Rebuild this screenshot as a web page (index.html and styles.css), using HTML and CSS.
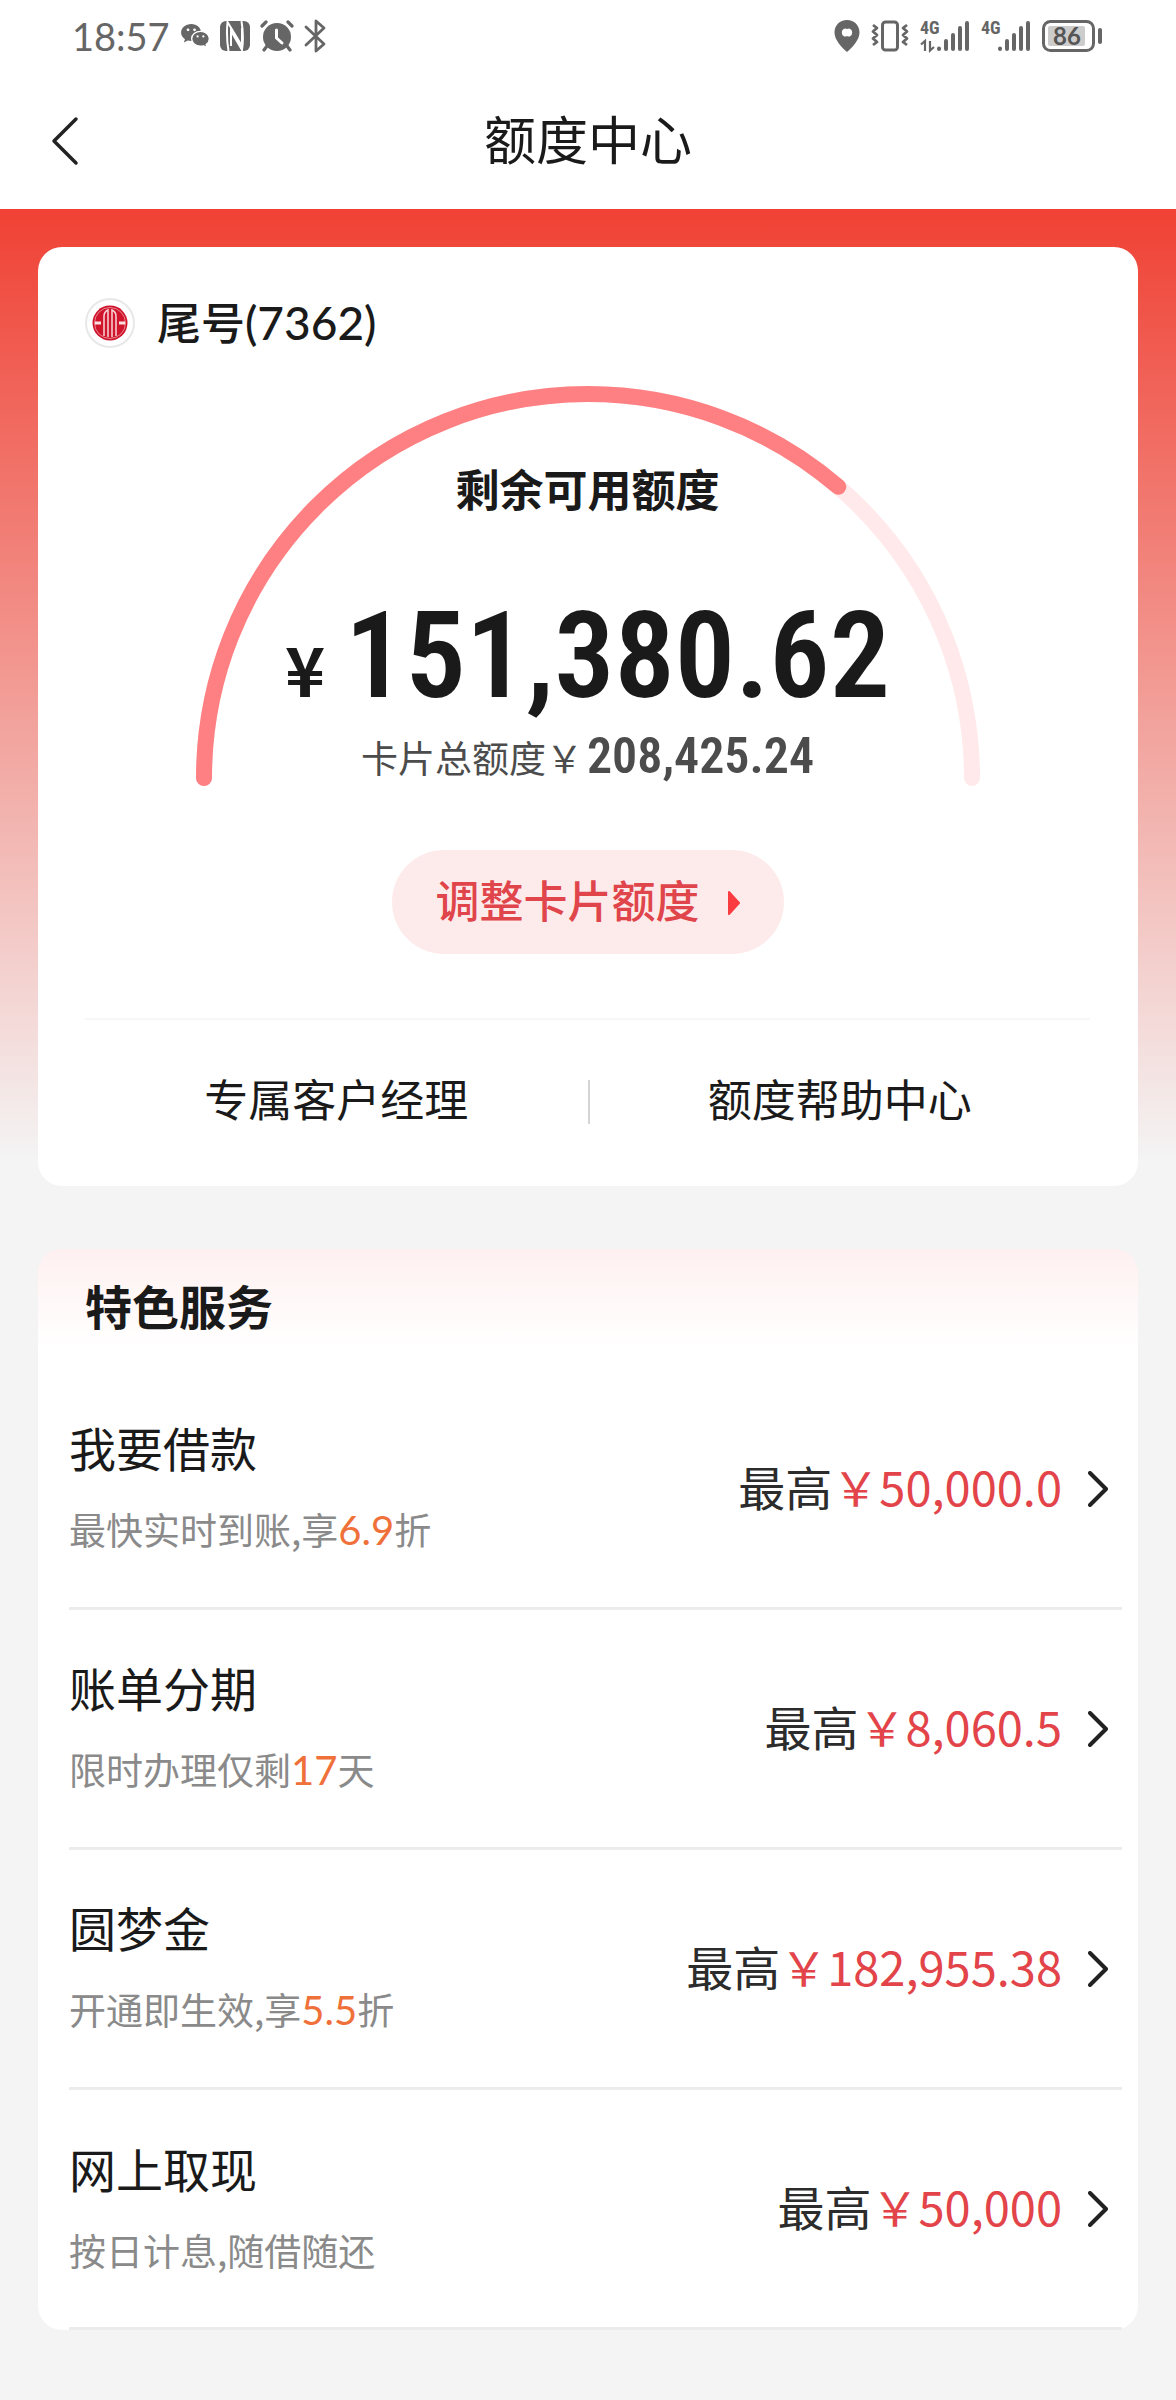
FILE: index.html
```html
<!DOCTYPE html>
<html lang="zh-CN">
<head>
<meta charset="utf-8">
<meta name="viewport" content="width=device-width, initial-scale=1">
<title>额度中心</title>
<link rel="stylesheet" href="styles.css">
</head>
<body>
<div class="status">
  <div class="status-side status-left">
    <time class="clock">18:57</time>
    <svg width="30" height="26" viewBox="0 0 32 28" aria-hidden="true">
      <path fill="#666" d="M12 1C5.900 1 1 5 1 10.200c0 3 1.600 5.500 4.200 7.200L4 21l4.200-2.100c1.200.3 2.500.5 3.800.5C18 19.400 22.500 15.500 22.500 10.200S18 1 12 1z"/>
      <path fill="#666" stroke="#fff" stroke-width="1.500" d="M22 9c-5.500 0-9.600 3.500-9.600 8s4.100 8 9.600 8c1.100 0 2.100-.1 3.100-.4L29 26.700l-1-3.500c2.200-1.500 3.500-3.700 3.500-6.200 0-4.500-4.200-8-9.500-8z"/>
      <g fill="#fff"><circle cx="8.500" cy="7.300" r="1.500"/><circle cx="15.500" cy="7.300" r="1.500"/><circle cx="18.800" cy="14.500" r="1.200"/><circle cx="25" cy="14.500" r="1.200"/></g>
    </svg>
    <svg width="30" height="30" viewBox="0 0 30 30" aria-hidden="true">
      <rect width="30" height="30" rx="6" fill="#666"/>
      <path fill="none" stroke="#fff" stroke-width="2" d="M8.500 30C7 21 6.500 11 7.500 1L22 25V7M21.500 0c1.500 9 2 19 .5 29L11 10v15"/>
    </svg>
    <svg width="34" height="32" viewBox="0 0 34 32" aria-hidden="true">
      <circle cx="17" cy="17" r="14" fill="#666"/>
      <path fill="none" stroke="#666" stroke-width="3.200" stroke-linecap="round" d="M2 6l4-4M32 6l-4-4M7 26l-3 4M27 26l3 4"/>
      <path fill="none" stroke="#fff" stroke-width="3" stroke-linecap="round" stroke-linejoin="round" d="M16.500 10v8l5.500 5"/>
    </svg>
    <svg width="22" height="34" viewBox="0 0 22 34" aria-hidden="true">
      <path fill="none" stroke="#666" stroke-width="2.800" stroke-linecap="round" stroke-linejoin="round" d="M2 8l18 17-8 7V2l8 7L2 26"/>
    </svg>
  </div>
  <div class="status-side status-right">
    <svg width="26" height="32" viewBox="0 0 26 32" aria-hidden="true">
      <path fill="#666" fill-rule="evenodd" d="M13 0C5.800 0 .5 5.400.5 12.400.5 20 8 27.500 13 32c5-4.500 12.500-12 12.500-19.600C25.500 5.400 20.200 0 13 0zm0 9a3.500 4 0 1 1 0 7 3.500 4 0 1 1 0-7z"/>
    </svg>
    <svg width="38" height="32" viewBox="0 0 38 32" aria-hidden="true">
      <rect x="11.500" y="2" width="15" height="28" rx="3" fill="none" stroke="#666" stroke-width="3"/>
      <path fill="none" stroke="#666" stroke-width="2.800" stroke-linejoin="round" d="M2 5l4 3-4 3.500L6 15l-4 3.500L6 22l-4 3M36 5l-4 3 4 3.500-4 3.500 4 3.500-4 3.500 4 3"/>
    </svg>
    <svg class="signal" width="50" height="34" viewBox="0 0 50 34" aria-hidden="true">
      <text class="net" x="0" y="15">4G</text>
      <path fill="none" stroke="#666" stroke-width="2.200" d="M1 25.500l4-3.500v10M10 22v9.500l4-3.500"/>
      <path fill="none" stroke="#666" stroke-width="4" stroke-linecap="round" d="M19 29.500v.5M26 22v8M33 16v14M40 9v21M47 4v26"/>
    </svg>
    <svg class="signal" width="50" height="34" viewBox="0 0 50 34" aria-hidden="true">
      <text class="net" x="0" y="15">4G</text>
      <path fill="none" stroke="#666" stroke-width="4" stroke-linecap="round" d="M19 29.500v.5M26 22v8M33 16v14M40 9v21M47 4v26"/>
    </svg>
    <svg width="60" height="32" viewBox="0 0 60 32" aria-hidden="true">
      <rect x="1.500" y="1.500" width="50" height="29" rx="7" fill="none" stroke="#666" stroke-width="3"/>
      <rect x="6" y="6" width="37" height="20" rx="2" fill="#ccc"/>
      <text class="charge" x="25" y="25" text-anchor="middle">86</text>
      <path stroke="#666" stroke-width="4" stroke-linecap="round" d="M58 10v12"/>
    </svg>
  </div>
</div>
<header class="bar">
  <button class="back" type="button" aria-label="返回">
    <svg width="28" height="50" viewBox="0 0 28 50" aria-hidden="true"><path fill="none" stroke="#222" stroke-width="3.500" stroke-linecap="round" stroke-linejoin="round" d="M25 3L3 25l22 22"/></svg>
  </button>
  <h1 class="bar-title">额度中心</h1>
</header>
<main class="page">
  <section class="card">
    <div class="account">
      <svg width="50" height="50" viewBox="0 0 50 50" aria-hidden="true">
        <circle cx="25" cy="25" r="24" fill="#fff" stroke="#e8e8e8" stroke-width="2"/>
        <circle cx="25" cy="25" r="17.500" fill="#d0142c"/>
        <circle cx="25" cy="25" r="15.500" fill="none" stroke="#e8868f"/>
        <path fill="none" stroke="#f9d3d6" stroke-width="1.500" d="M19 38V18q0-4 4-6v27M31 38V18q0-4-4-6v27"/>
        <path fill="none" stroke="#fbdfe1" stroke-width="3" d="M10 25h6M34 25h6"/>
      </svg>
      <span class="tail">尾号<span class="tail-num">(7362)</span></span>
    </div>
    <div class="gauge">
      <svg class="arc" viewBox="0 0 784 400" aria-hidden="true">
        <path class="arc-track" d="M8 392a384 384 0 0 1 768 0"/>
        <path class="arc-value" pathLength="1000" stroke-dasharray="726 1000" d="M8 392a384 384 0 0 1 768 0"/>
      </svg>
      <div class="gauge-text">
        <h2 class="gauge-label">剩余可用额度</h2>
        <p class="balance"><span class="yen">¥</span><span>151,380.62</span></p>
        <p class="total"><span>卡片总额度￥</span><span class="total-num">208,425.24</span></p>
      </div>
    </div>
    <button class="adjust" type="button">调整卡片额度
      <svg class="play" width="12" height="26" viewBox="0 0 12 26" aria-hidden="true"><path fill="#fa3c41" stroke="#fa3c41" stroke-width="2" stroke-linejoin="round" d="M1 2l10 11L1 24z"/></svg>
    </button>
    <nav class="links">
      <a class="link" href="#manager">专属客户经理</a>
      <a class="link" href="#help">额度帮助中心</a>
    </nav>
  </section>
  <section class="services">
    <h2 class="services-title">特色服务</h2>
    <ul class="list">
      <li><a class="row" href="#loan">
        <span class="info"><span class="name">我要借款</span><span class="desc">最快实时到账,享<b class="hot">6.9</b>折</span></span>
        <span class="limit">最高<span class="amount">￥50,000.0</span></span>
        <svg class="chevron" viewBox="0 0 20 36" aria-hidden="true"><path d="M2 2l16 16L2 34"/></svg>
      </a></li>
      <li><a class="row" href="#bill">
        <span class="info"><span class="name">账单分期</span><span class="desc">限时办理仅剩<b class="hot">17</b>天</span></span>
        <span class="limit">最高<span class="amount">￥8,060.5</span></span>
        <svg class="chevron" viewBox="0 0 20 36" aria-hidden="true"><path d="M2 2l16 16L2 34"/></svg>
      </a></li>
      <li><a class="row" href="#dream">
        <span class="info"><span class="name">圆梦金</span><span class="desc">开通即生效,享<b class="hot">5.5</b>折</span></span>
        <span class="limit">最高<span class="amount">￥182,955.38</span></span>
        <svg class="chevron" viewBox="0 0 20 36" aria-hidden="true"><path d="M2 2l16 16L2 34"/></svg>
      </a></li>
      <li><a class="row" href="#cash">
        <span class="info"><span class="name">网上取现</span><span class="desc">按日计息,随借随还</span></span>
        <span class="limit">最高<span class="amount">￥50,000</span></span>
        <svg class="chevron" viewBox="0 0 20 36" aria-hidden="true"><path d="M2 2l16 16L2 34"/></svg>
      </a></li>
    </ul>
  </section>
</main>
</body>
</html>
```
FILE: styles.css
```css
* { box-sizing: border-box; }
body {
  margin: 0;
  background: #f4f4f4;
  color: #1a1a1a;
  font-family: "Noto Sans CJK SC", sans-serif;
}
h1, h2, p, ul { margin: 0; padding: 0; }
ul { list-style: none; }
a { color: inherit; text-decoration: none; }
button { border: 0; font: inherit; color: inherit; cursor: pointer; }
svg { display: block; flex: none; }

.status {
  display: flex;
  justify-content: space-between;
  height: 72px;
  padding: 0 74px 0 72px;
  background: #fff;
}
.status-side { display: flex; align-items: center; }
.status-left { gap: 10px; }
.status-right { gap: 11px; }
.clock { font: 38px/48px Lato, sans-serif; color: #666; }
.signal { overflow: visible; }
.net { font: 700 18px "Roboto Condensed", Roboto, sans-serif; fill: #666; }
.charge { font: 700 24px Lato, sans-serif; fill: #555; }

.bar {
  display: grid;
  grid-template-columns: 1fr auto 1fr;
  align-items: center;
  height: 137px;
  padding: 0 51px;
  background: #fff;
}
.back { justify-self: start; padding: 0; background: none; }
.bar-title { padding-bottom: 6px; font-size: 52px; line-height: 72px; font-weight: 400; }

.page {
  display: flex;
  flex-direction: column;
  gap: 63px;
  padding: 38px 38px 70px;
  background: linear-gradient(#f04134, #f4f4f4 950px);
}
.card { border-radius: 24px; background: #fff; padding: 51px 48px 0 47px; }
.account { display: flex; align-items: center; gap: 22px; height: 50px; }
.tail { padding-bottom: 2px; font-size: 44px; line-height: 50px; font-weight: 500; }
.tail-num { font-family: Lato, sans-serif; font-size: 46px; }

.gauge { display: grid; justify-content: center; margin-top: 38px; }
.arc, .gauge-text { grid-area: 1 / 1; }
.arc { width: 784px; }
.arc path { fill: none; stroke-width: 16; stroke-linecap: round; }
.arc .arc-track { stroke: #ffe9ea; }
.arc .arc-value { stroke: #ff8082; }
.gauge-text { padding-top: 70px; text-align: center; }
.gauge-label { font-size: 44px; line-height: 64px; font-weight: 700; }
.balance {
  display: flex;
  justify-content: center;
  align-items: baseline;
  gap: 20px;
  margin-top: 66px;
  font: 600 120px/140px "Roboto Condensed", Roboto, sans-serif;
}
.yen { font: 700 68px/68px "Noto Sans CJK SC", sans-serif; }
.total {
  display: flex;
  justify-content: center;
  align-items: baseline;
  gap: 4px;
  font-size: 37px;
  line-height: 60px;
  color: #4c4c4c;
}
.total-num { font: 600 50px/60px "Roboto Condensed", Roboto, sans-serif; }

.adjust {
  display: flex;
  align-items: center;
  justify-content: center;
  gap: 28px;
  width: 392px;
  height: 104px;
  margin: 63px auto 64px;
  padding: 0 0 6px;
  border-radius: 52px;
  background: #fdebeb;
  color: #e0454b;
  font-size: 44px;
  font-weight: 500;
}
.play { margin-top: 8px; }
.links {
  display: grid;
  grid-template-columns: 1fr 1fr;
  padding: 60px 0 62px;
  border-top: 2px solid #f7f7f7;
}
.link { padding-bottom: 8px; font-size: 44px; line-height: 36px; text-align: center; }
.link + .link { border-left: 2px solid #d4d4d4; }

.services {
  border-radius: 24px;
  background: #fff linear-gradient(#fff0f0, #fff) no-repeat 0 0 / 100% 100px;
}
.services-title { padding: 20px 47px 29px; font-size: 47px; line-height: 72px; font-weight: 700; }
.list { padding: 0 16px 0 31px; }
.row {
  display: flex;
  align-items: center;
  height: 240px;
  padding-right: 14px;
  border-bottom: 3px solid #ececec;
}
.info { display: flex; flex: 1; flex-direction: column; gap: 20px; padding-bottom: 2px; }
.name { font-size: 47px; line-height: 64px; }
.desc { font-size: 37px; line-height: 60px; color: #8a8a8a; }
.hot { font-size: 40px; font-weight: 400; font-family: Lato, sans-serif; color: #f0703a; }
.limit { padding-bottom: 6px; font-size: 47px; line-height: 64px; color: #2c2c2c; }
.amount { color: #e2444a; }
.chevron { width: 20px; height: 36px; margin-left: 26px; }
.chevron path { fill: none; stroke: #222; stroke-width: 4; stroke-linecap: round; stroke-linejoin: round; }
```
